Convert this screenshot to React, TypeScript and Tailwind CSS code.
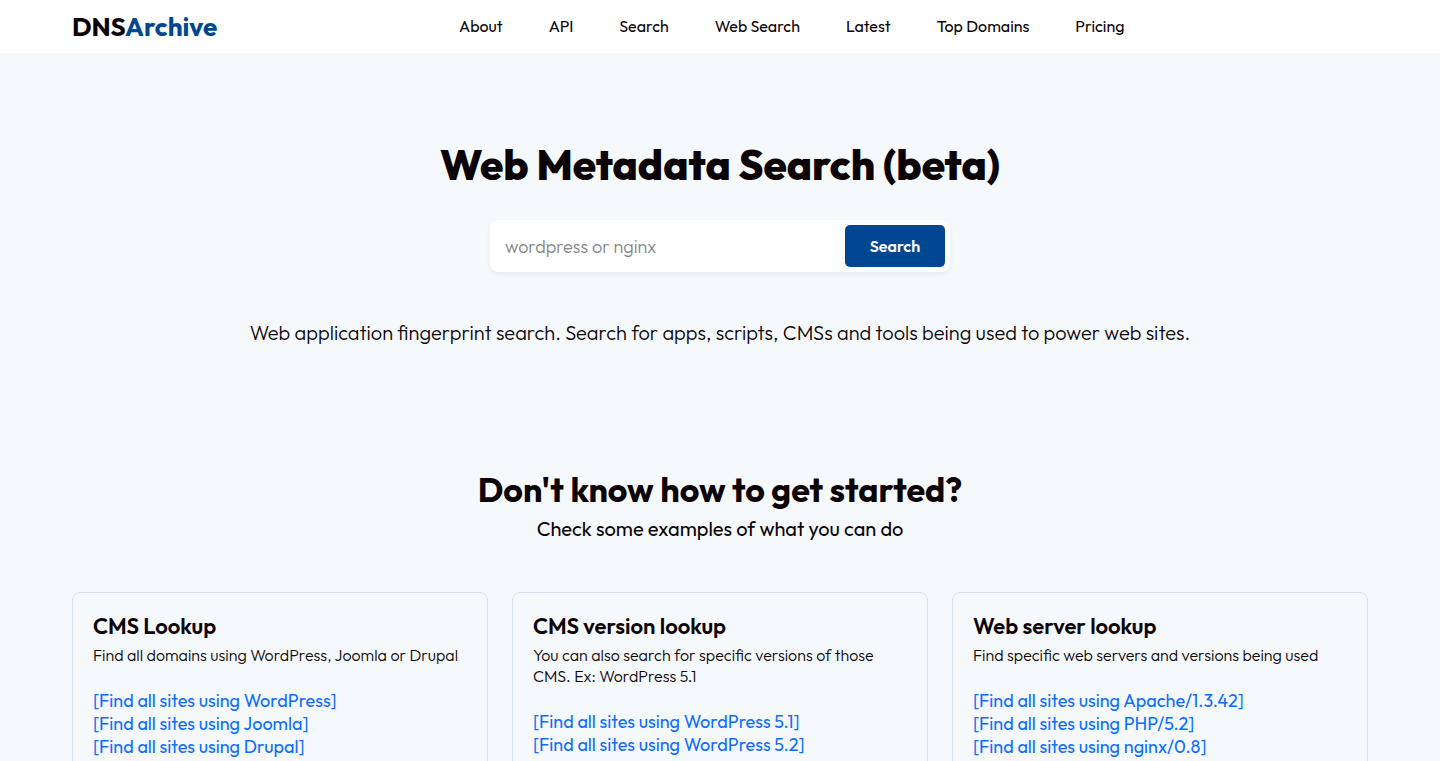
const nav = ['About', 'API', 'Search', 'Web Search', 'Latest', 'Top Domains', 'Pricing'];

const cards = [
  {
    title: 'CMS Lookup',
    text: 'Find all domains using WordPress, Joomla or Drupal',
    links: ['WordPress', 'Joomla', 'Drupal'],
  },
  {
    title: 'CMS version lookup',
    text: 'You can also search for specific versions of those CMS. Ex: WordPress 5.1',
    links: ['WordPress 5.1', 'WordPress 5.2'],
  },
  {
    title: 'Web server lookup',
    text: 'Find specific web servers and versions being used',
    links: ['Apache/1.3.42', 'PHP/5.2', 'nginx/0.8'],
  },
];

export default function App() {
  return (
    <div className="min-h-screen bg-[#f5f9fc] font-[Outfit,Lato,sans-serif] text-[#0b0306]">
      <header className="bg-white pb-px">
        <div className="mx-auto flex h-[52px] max-w-[1296px] items-center">
          <a href="#home" className="w-[387px] text-[26px] font-bold">
            DNS<span className="text-[#004792]">Archive</span>
          </a>
          <nav className="flex gap-[46px] text-base">
            {nav.map((item) => (
              <a key={item} href="#top" className="whitespace-nowrap">
                {item}
              </a>
            ))}
          </nav>
        </div>
      </header>
      <main>
        <section className="flex flex-col items-center pt-[87px] text-center">
          <h1 className="text-[42px] leading-[50px] font-extrabold">Web Metadata Search (beta)</h1>
          <form
            className="mt-[30px] flex w-[460px] rounded-lg bg-white p-[5px] shadow-[0_3px_5px_rgba(0,0,0,0.06)]"
            onSubmit={(e) => e.preventDefault()}
          >
            <input
              aria-label="Search query"
              placeholder="wordpress or nginx"
              className="h-[42px] min-w-0 flex-1 px-[10px] text-lg font-light outline-none placeholder:text-[#858585]"
            />
            <button className="w-[100px] rounded-[5px] bg-[#004792] text-base font-semibold text-white">Search</button>
          </form>
          <p className="mt-[46px] text-xl leading-[30px] font-light">
            Web application fingerprint search. Search for apps, scripts, CMSs and tools being used to power web sites.
          </p>
        </section>
        <section className="mx-auto max-w-[1296px] pt-[120px]">
          <h2 className="text-center text-[34px] leading-[44px] font-bold">Don't know how to get started?</h2>
          <p className="mt-0.5 text-center text-xl leading-[30px]">Check some examples of what you can do</p>
          <div className="mt-12 grid grid-cols-3 gap-6">
            {cards.map((card) => (
              <article key={card.title} className="rounded-lg border border-[#d6e2f0] p-5">
                <h3 className="text-[22px] leading-[26px] font-semibold">{card.title}</h3>
                <p className="mt-1.5 text-base leading-[21px] font-light">{card.text}</p>
                <ul className="mt-[23px] text-lg leading-[23px] text-[#0d6efd]">
                  {card.links.map((link) => (
                    <li key={link}>
                      <a href="#find">[Find all sites using {link}]</a>
                    </li>
                  ))}
                </ul>
              </article>
            ))}
          </div>
        </section>
      </main>
    </div>
  );
}
